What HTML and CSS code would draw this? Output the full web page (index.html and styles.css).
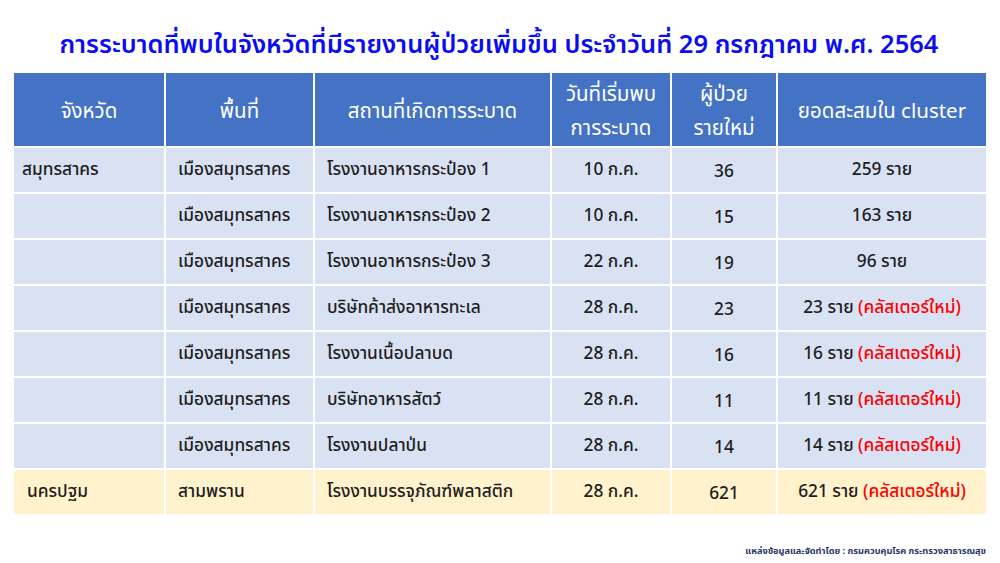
FILE: index.html
```html
<!DOCTYPE html>
<html lang="th">
<head>
<meta charset="utf-8">
<link rel="stylesheet" href="styles.css">
</head>
<body>
<div class="page">
  <h1 class="title">การระบาดที่พบในจังหวัดที่มีรายงานผู้ป่วยเพิ่มขึ้น ประจำวันที่ 29 กรกฎาคม พ.ศ. 2564</h1>
  <table class="tbl">
    <colgroup>
      <col class="c1"><col class="c2"><col class="c3"><col class="c4"><col class="c5"><col class="c6">
    </colgroup>
    <thead>
      <tr>
        <th>จังหวัด</th>
        <th>พื้นที่</th>
        <th>สถานที่เกิดการระบาด</th>
        <th>วันที่เริ่มพบ<br>การระบาด</th>
        <th>ผู้ป่วย<br>รายใหม่</th>
        <th>ยอดสะสมใน cluster</th>
      </tr>
    </thead>
    <tbody>
      <tr><td class="l first">สมุทรสาคร</td><td class="l">เมืองสมุทรสาคร</td><td class="l">โรงงานอาหารกระป๋อง 1</td><td>10 ก.ค.</td><td>36</td><td>259 ราย</td></tr>
      <tr><td class="l"></td><td class="l">เมืองสมุทรสาคร</td><td class="l">โรงงานอาหารกระป๋อง 2</td><td>10 ก.ค.</td><td>15</td><td>163 ราย</td></tr>
      <tr><td class="l"></td><td class="l">เมืองสมุทรสาคร</td><td class="l">โรงงานอาหารกระป๋อง 3</td><td>22 ก.ค.</td><td>19</td><td>96 ราย</td></tr>
      <tr><td class="l"></td><td class="l">เมืองสมุทรสาคร</td><td class="l">บริษัทค้าส่งอาหารทะเล</td><td>28 ก.ค.</td><td>23</td><td>23 ราย <span class="new">(คลัสเตอร์ใหม่)</span></td></tr>
      <tr><td class="l"></td><td class="l">เมืองสมุทรสาคร</td><td class="l">โรงงานเนื้อปลาบด</td><td>28 ก.ค.</td><td>16</td><td>16 ราย <span class="new">(คลัสเตอร์ใหม่)</span></td></tr>
      <tr><td class="l"></td><td class="l">เมืองสมุทรสาคร</td><td class="l">บริษัทอาหารสัตว์</td><td>28 ก.ค.</td><td>11</td><td>11 ราย <span class="new">(คลัสเตอร์ใหม่)</span></td></tr>
      <tr><td class="l"></td><td class="l">เมืองสมุทรสาคร</td><td class="l">โรงงานปลาป่น</td><td>28 ก.ค.</td><td>14</td><td>14 ราย <span class="new">(คลัสเตอร์ใหม่)</span></td></tr>
      <tr class="yellow"><td class="l ind">นครปฐม</td><td class="l">สามพราน</td><td class="l">โรงงานบรรจุภัณฑ์พลาสติก</td><td>28 ก.ค.</td><td>621</td><td>621 ราย <span class="new">(คลัสเตอร์ใหม่)</span></td></tr>
    </tbody>
  </table>
  <div class="footer">แหล่งข้อมูลและจัดทำโดย : กรมควบคุมโรค กระทรวงสาธารณสุข</div>
</div>
</body>
</html>
```

FILE: styles.css
```css
html, body {
  margin: 0;
  padding: 0;
  background: #ffffff;
}
body {
  width: 1000px;
  height: 563px;
  overflow: hidden;
  font-family: "Noto Sans", "Noto Sans Thai", "Tahoma", sans-serif;
}
.page {
  display: flex;
  flex-direction: column;
  padding: 0 14px 0 12px;
}
.title {
  margin: 25px 0 0 0;
  height: 46px;
  text-align: center;
  font-size: 25.5px;
  line-height: 36px;
  font-weight: 600;
  color: #0c0cf0;
  white-space: nowrap;
}
.tbl {
  border-collapse: separate;
  border-spacing: 2px;
  table-layout: fixed;
  width: 976px;
}
.c1 { width: 150px; }
.c2 { width: 147px; }
.c3 { width: 235px; }
.c4 { width: 118px; }
.c5 { width: 104px; }
.c6 { width: 208px; }
.tbl th {
  background: #4472c4;
  color: #ffffff;
  font-weight: normal;
  font-size: 20.5px;
  line-height: 34px;
  height: 73px;
  padding: 0;
  text-align: center;
  vertical-align: middle;
}
.tbl td {
  background: #d9e2f3;
  color: #1e1e1e;
  font-size: 17.3px;
  font-weight: 500;
  height: 44px;
  padding: 0;
  text-align: center;
  vertical-align: middle;
  white-space: nowrap;
}
.tbl td.l {
  text-align: left;
  padding-left: 12px;
}
.tbl td.l.first { padding-left: 8px; }
.tbl td.l.ind { padding-left: 13px; }
.tbl tr.yellow td {
  background: #fff2cc;
}
.new {
  color: #ff0000;
}
.footer {
  margin-top: 28px;
  text-align: right;
  font-size: 9.2px;
  font-weight: bold;
  color: #1f3864;
}
```
